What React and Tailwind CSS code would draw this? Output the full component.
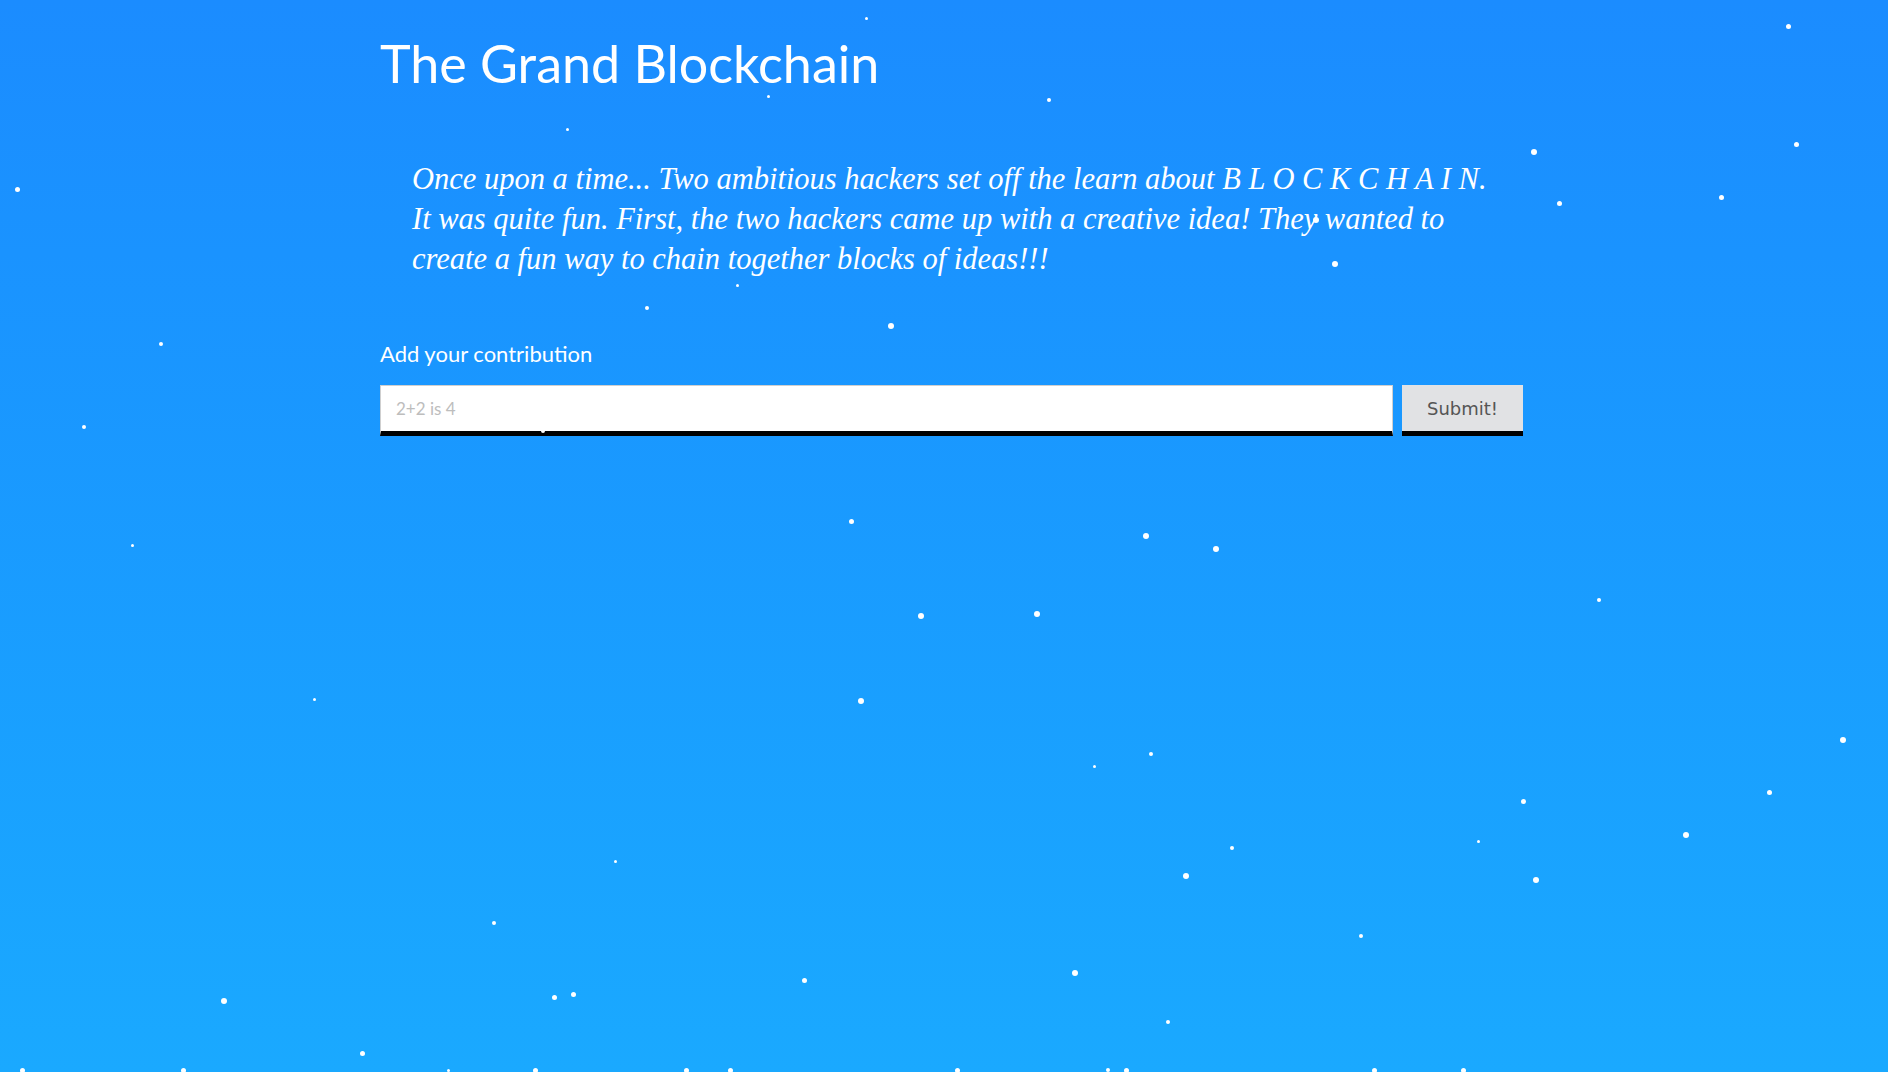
import React from 'react';

// snow flakes: [x, y, size] in page pixels
const flakes = [
  [866, 18, 3], [1788, 26, 5], [768, 96, 3], [1049, 100, 4], [567, 129, 3],
  [1534, 152, 6], [1796, 144, 5], [17, 189, 5], [1559, 203, 5], [1721, 197, 5],
  [1316, 220, 6], [1335, 264, 6], [737, 285, 3], [647, 308, 4], [891, 326, 6],
  [161, 344, 4], [84, 427, 4], [543, 431, 4], [851, 521, 5], [1146, 536, 6],
  [1216, 549, 6], [132, 545, 3], [1599, 600, 4], [921, 616, 6], [1037, 614, 6],
  [861, 701, 6], [314, 699, 3], [1843, 740, 6], [1151, 754, 4], [1094, 766, 3],
  [1523, 801, 5], [1769, 792, 5], [1686, 835, 6], [1478, 841, 3], [1232, 848, 4],
  [1186, 876, 6], [1536, 880, 6], [615, 861, 3], [494, 923, 4], [1361, 936, 4],
  [1075, 973, 6], [804, 980, 5], [224, 1001, 6], [554, 997, 5], [573, 994, 5],
  [1168, 1022, 4], [362, 1053, 5],
  [22, 1070, 5], [183, 1070, 5], [448, 1070, 3], [535, 1070, 5], [686, 1070, 5],
  [730, 1070, 5], [957, 1070, 5], [1108, 1070, 4], [1126, 1070, 5], [1374, 1070, 5],
  [1463, 1070, 5],
];

function Snow() {
  return (
    <div className="pointer-events-none absolute inset-0 overflow-hidden">
      {flakes.map(([x, y, s], i) => (
        <span
          key={i}
          className="absolute rounded-full bg-white"
          style={{ left: x - s / 2, top: y - s / 2, width: s, height: s }}
        />
      ))}
    </div>
  );
}

export default function App() {
  return (
    <div className="relative h-[1072px] w-full overflow-hidden bg-gradient-to-b from-[#1b8cff] to-[#1aa9ff]">
      <div className="relative ml-[380px] w-[1143px] pt-[31px]">
        <h1 className="text-[52px] leading-[64px] text-white font-['Lato',sans-serif]">
          The Grand Blockchain
        </h1>

        <p className="mt-[64px] ml-[32px] whitespace-nowrap text-[30.5px] leading-[40px] italic text-white font-['Liberation_Serif',serif]">
          Once upon a time... Two ambitious hackers set off the learn about B L O C K C H A I N.
          <br />
          It was quite fun. First, the two hackers came up with a creative idea! They wanted to
          <br />
          create a fun way to chain together blocks of ideas!!!
        </p>

        <label className="mt-[58px] block text-[22px] text-white font-['Lato',sans-serif]">
          Add your contribution
        </label>

        <form className="mt-[15px] flex gap-[9px]">
          <input
            type="text"
            placeholder="2+2 is 4"
            className="h-[51px] w-[1013px] border border-[#cfcfcf] border-b-[5px] border-b-black bg-white px-[15px] text-[17px] text-gray-700 outline-none placeholder:text-[#bdbdbd] font-['Lato',sans-serif]"
          />
          <button
            type="button"
            className="h-[51px] w-[121px] border-b-[5px] border-black bg-[#e1e2e4] text-[18px] text-[#555] font-['DejaVu_Sans',sans-serif]"
          >
            Submit!
          </button>
        </form>
      </div>
      <Snow />
    </div>
  );
}
